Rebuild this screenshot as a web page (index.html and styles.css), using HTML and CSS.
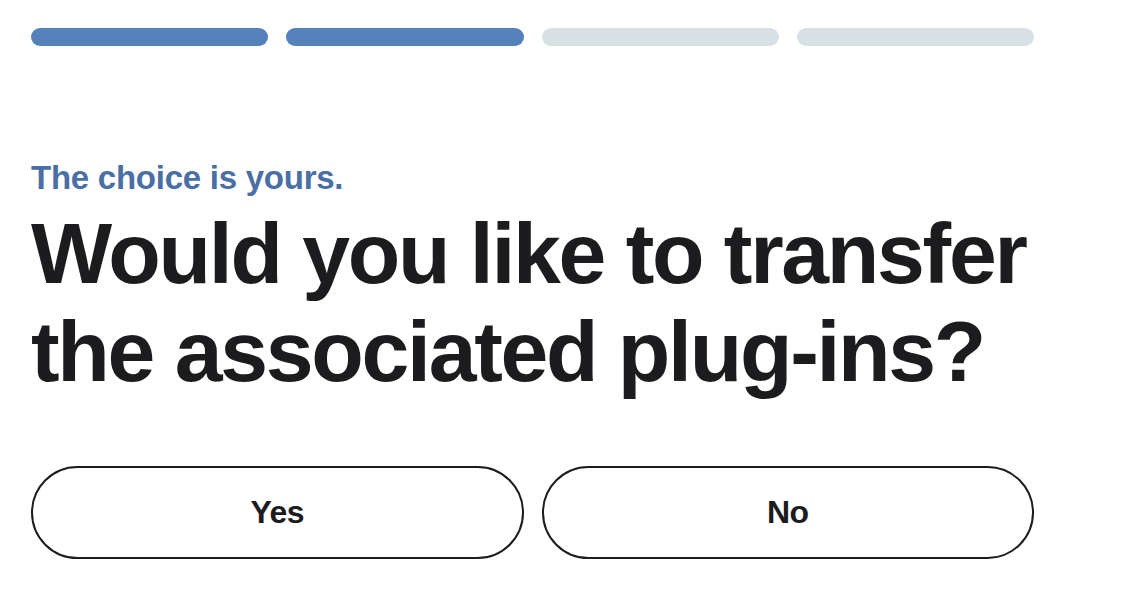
FILE: index.html
```html
<!DOCTYPE html>
<html>
<head>
	<title>Transfer plug-ins</title>
	<link rel="stylesheet" href="styles.css">
</head>
<body>

<div class="wizard">
	<div class="steps">
		<span class="step done"></span>
		<span class="step done"></span>
		<span class="step"></span>
		<span class="step"></span>
	</div>

	<p class="eyebrow">The choice is yours.</p>
	<h1 class="question">Would you like to transfer the associated plug-ins?</h1>

	<div class="answers">
		<button class="answer">Yes</button>
		<button class="answer">No</button>
	</div>
</div>

</body>
</html>
```

FILE: styles.css
```css
body {
	margin: 0;
	background: #fff;
	font-family: "Liberation Sans", Arial, sans-serif;
	color: #1c1c1e;
}
.wizard {
	width: 1003px;
	padding: 28px 0 0 31px;
}
.steps {
	display: flex;
	gap: 18px;
}
.step {
	flex: 1;
	height: 18px;
	border-radius: 9px;
	background: #d7e0e3;
}
.step.done {
	background: #5682bc;
}
.eyebrow {
	margin: 112px 0 0;
	font-size: 33px;
	line-height: 40px;
	font-weight: 700;
	letter-spacing: -0.25px;
	color: #4a6fa5;
}
.question {
	margin: 6px 0 0;
	font-size: 86px;
	line-height: 98px;
	font-weight: 700;
	letter-spacing: -2.3px;
	width: 1003px;
}
.answers {
	display: flex;
	gap: 18px;
	margin-top: 66px;
}
.answer {
	flex: 1;
	height: 93px;
	border: 2px solid #1c1c1e;
	border-radius: 47px;
	background: #fff;
	font-family: inherit;
	font-size: 32px;
	font-weight: 700;
	letter-spacing: -0.5px;
	color: #1c1c1e;
	cursor: pointer;
}
```
